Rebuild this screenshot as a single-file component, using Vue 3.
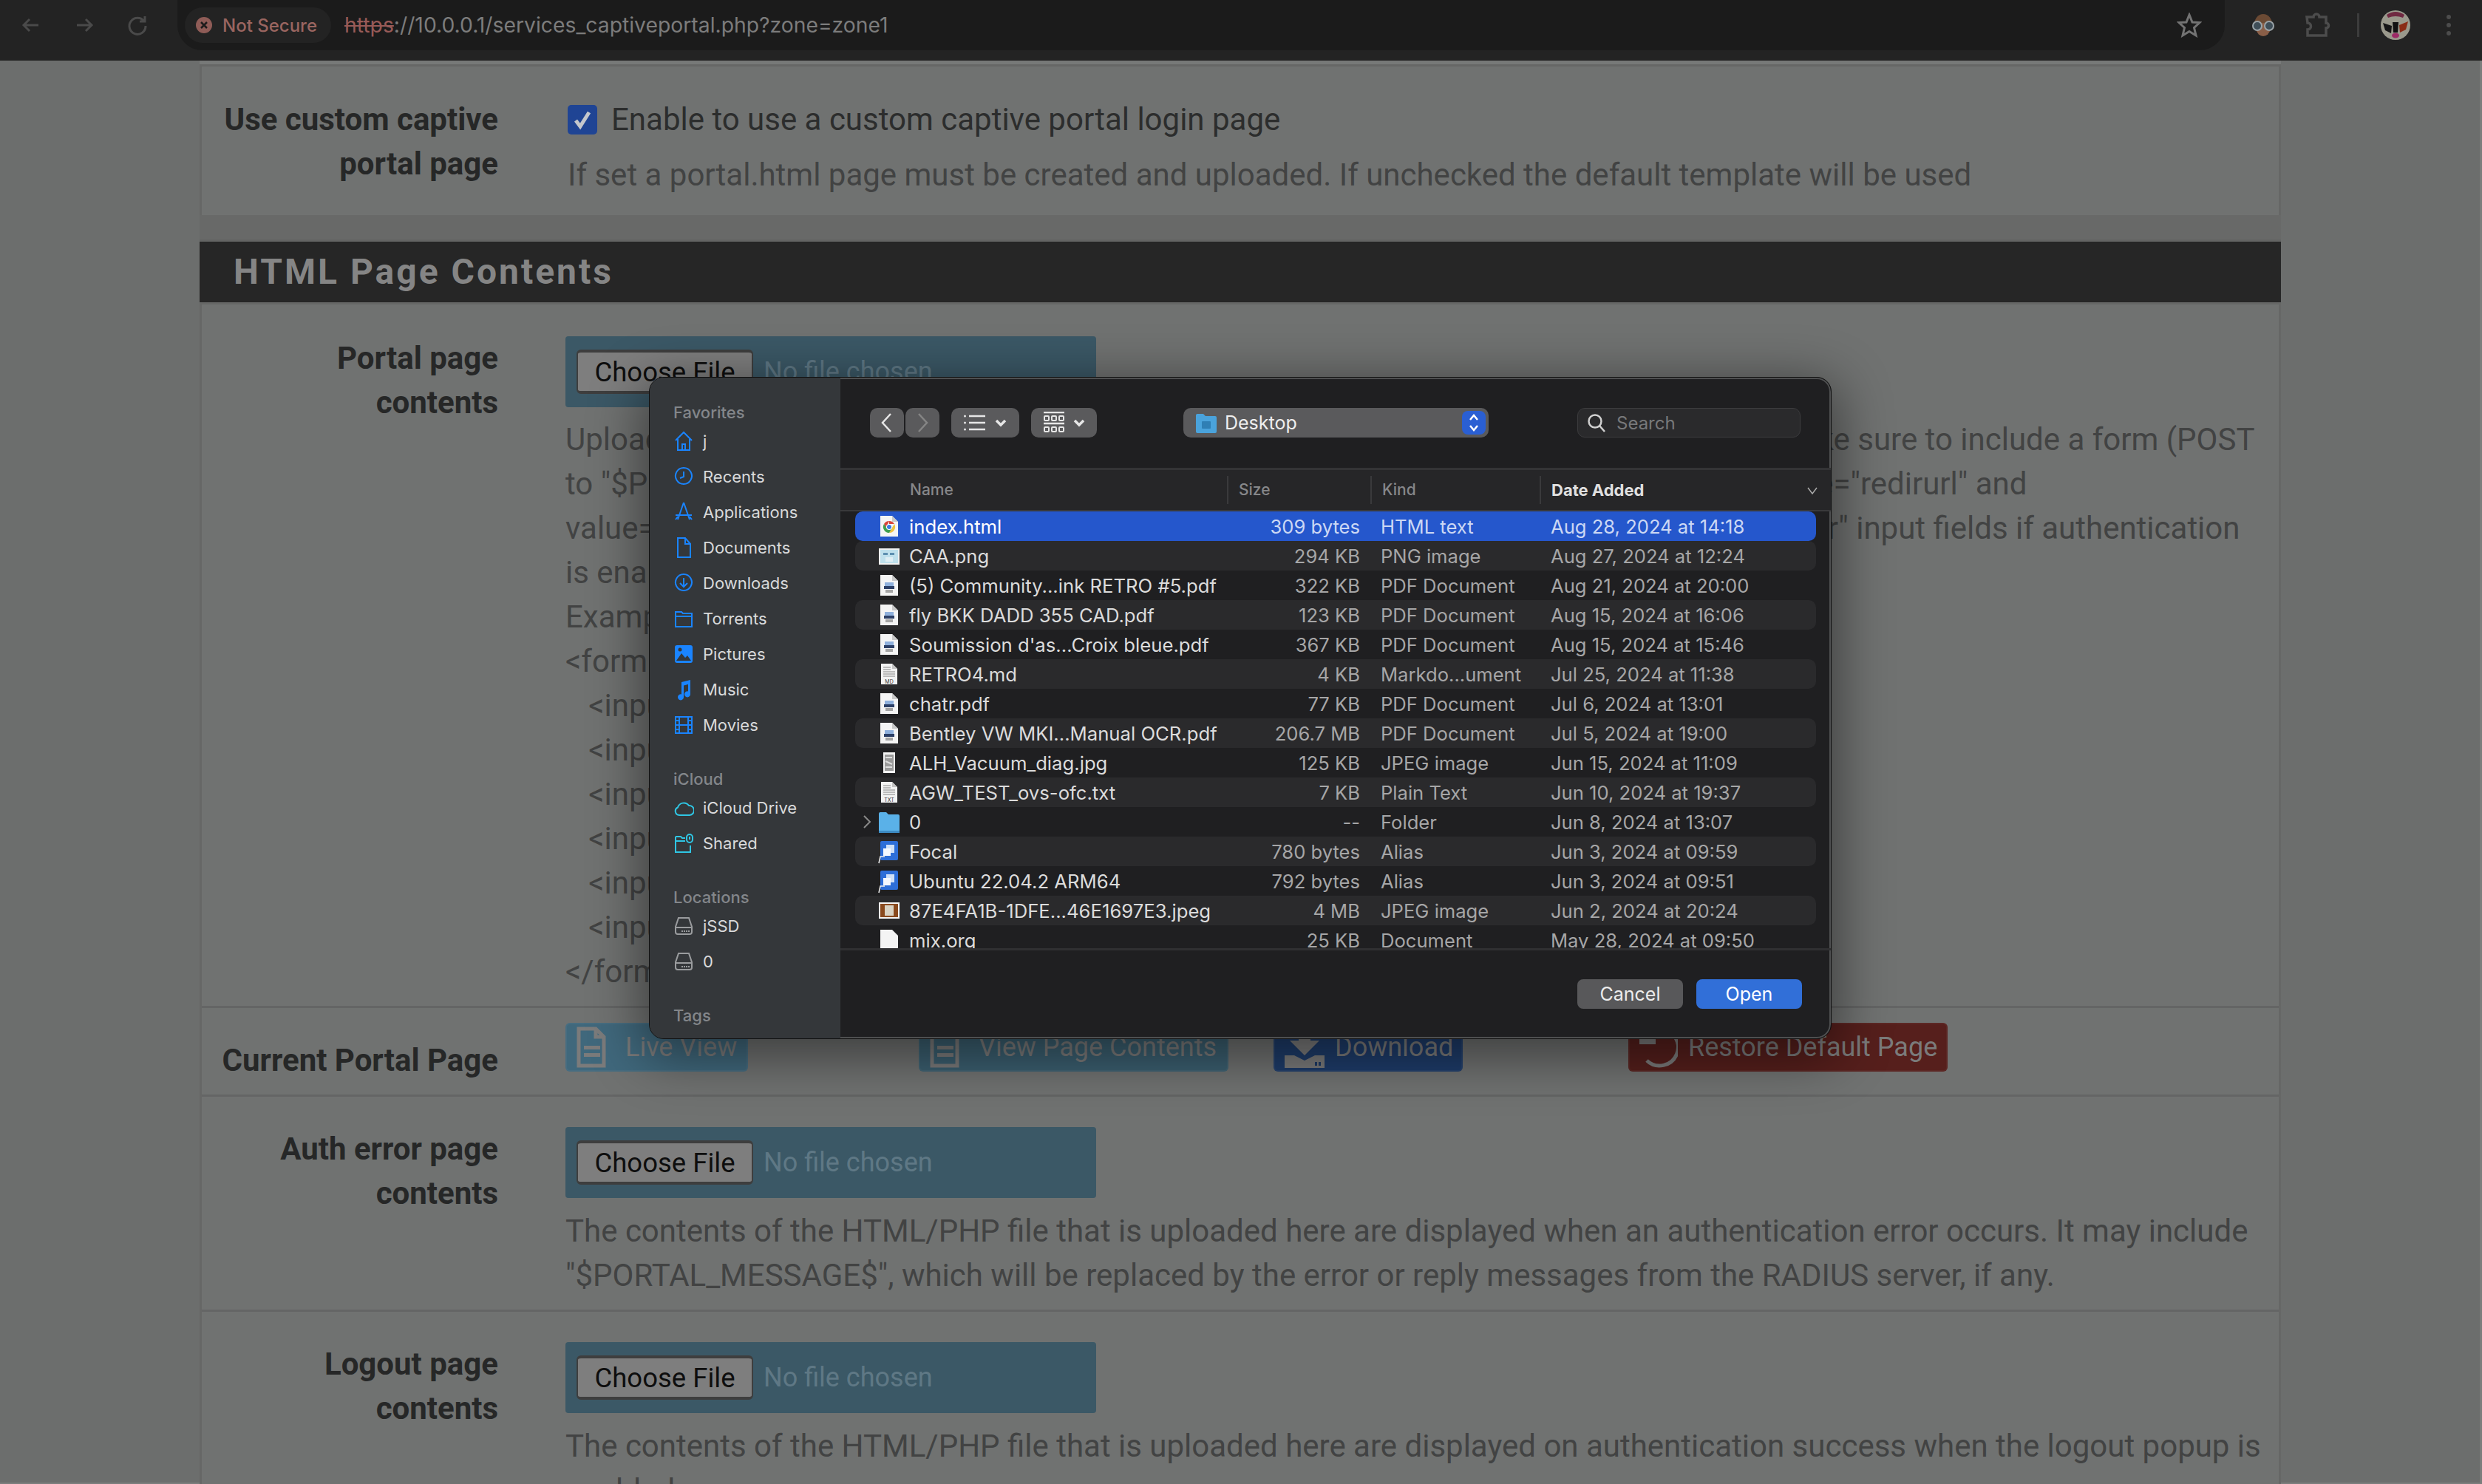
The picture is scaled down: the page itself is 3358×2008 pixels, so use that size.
<script setup>
const sidebar = [
  { title: 'Favorites', items: [
    { label: 'j', icon: 'home' },
    { label: 'Recents', icon: 'clock' },
    { label: 'Applications', icon: 'apps' },
    { label: 'Documents', icon: 'doc' },
    { label: 'Downloads', icon: 'download' },
    { label: 'Torrents', icon: 'folder' },
    { label: 'Pictures', icon: 'picture' },
    { label: 'Music', icon: 'music' },
    { label: 'Movies', icon: 'film' }
  ] },
  { title: 'iCloud', items: [
    { label: 'iCloud Drive', icon: 'cloud', tone: 'cyan' },
    { label: 'Shared', icon: 'shared', tone: 'cyan' }
  ] },
  { title: 'Locations', items: [
    { label: 'jSSD', icon: 'disk', tone: 'grey' },
    { label: '0', icon: 'disk', tone: 'grey' }
  ] },
  { title: 'Tags', items: [] }
]

const paths = {
  home: 'M2 14 L13 3 L24 14 M5 12 V27 H21 V12 M11 27 V19 H15 V27',
  clock: 'M13 3 A11 11 0 1 1 12.900 3 Z M13 8 V15 L8 17',
  apps: 'M13 2 L21 25 M13 2 L5 25 M2 19 H24 M2 25 L5 21 M24 25 L21 21',
  doc: 'M5 2 H15 L22 10 V28 H5 Z M15 2 V10 H22',
  download: 'M13 3 A11 11 0 1 1 12.900 3 Z M13 8 V20 M8 15 L13 20 L18 15',
  folder: 'M2 6 H10 L12 8 H24 V26 H2 Z M2 12 H24',
  film: 'M2 4 H24 V26 H2 Z M7 4 V26 M19 4 V26 M7 15 H19 M2 9 H7 M2 15 H7 M2 21 H7 M19 9 H24 M19 15 H24 M19 21 H24',
  cloud: 'M7 25 A5.500 5.500 0 0 1 5 14.500 A8.500 8.500 0 0 1 20 12 A6.500 6.500 0 0 1 21 25 Z',
  shared: 'M2 6 H9 L11 8 H15 M2 6 V27 H22 V18 M2 12 H15 M21 3 A4 4 0 0 1 25 7 V10 A4 4 0 0 1 17 10 V7 A4 4 0 0 1 21 3 Z M21 6 V10',
  disk: 'M6 4 H20 L24 16 V23 A3 3 0 0 1 21 26 H5 A3 3 0 0 1 2 23 V16 Z M2 17 H24 M11 21 V23 M14 21 V23 M17 21 V23 M20 21 V23'
}

const files = [
  { name: 'index.html', size: '309 bytes', kind: 'HTML text', date: 'Aug 28, 2024 at 14:18', icon: 'chrome', selected: true },
  { name: 'CAA.png', size: '294 KB', kind: 'PNG image', date: 'Aug 27, 2024 at 12:24', icon: 'png' },
  { name: '(5) Community...ink RETRO #5.pdf', size: '322 KB', kind: 'PDF Document', date: 'Aug 21, 2024 at 20:00', icon: 'pdf' },
  { name: 'fly BKK DADD 355 CAD.pdf', size: '123 KB', kind: 'PDF Document', date: 'Aug 15, 2024 at 16:06', icon: 'pdf' },
  { name: "Soumission d'as...Croix bleue.pdf", size: '367 KB', kind: 'PDF Document', date: 'Aug 15, 2024 at 15:46', icon: 'pdf' },
  { name: 'RETRO4.md', size: '4 KB', kind: 'Markdo...ument', date: 'Jul 25, 2024 at 11:38', icon: 'text', tag: 'MD' },
  { name: 'chatr.pdf', size: '77 KB', kind: 'PDF Document', date: 'Jul 6, 2024 at 13:01', icon: 'pdf' },
  { name: 'Bentley VW MKI...Manual OCR.pdf', size: '206.7 MB', kind: 'PDF Document', date: 'Jul 5, 2024 at 19:00', icon: 'pdf' },
  { name: 'ALH_Vacuum_diag.jpg', size: '125 KB', kind: 'JPEG image', date: 'Jun 15, 2024 at 11:09', icon: 'scan' },
  { name: 'AGW_TEST_ovs-ofc.txt', size: '7 KB', kind: 'Plain Text', date: 'Jun 10, 2024 at 19:37', icon: 'text', tag: 'TXT' },
  { name: '0', size: '--', kind: 'Folder', date: 'Jun 8, 2024 at 13:07', icon: 'folder', expand: true },
  { name: 'Focal', size: '780 bytes', kind: 'Alias', date: 'Jun 3, 2024 at 09:59', icon: 'alias' },
  { name: 'Ubuntu 22.04.2 ARM64', size: '792 bytes', kind: 'Alias', date: 'Jun 3, 2024 at 09:51', icon: 'alias' },
  { name: '87E4FA1B-1DFE...46E1697E3.jpeg', size: '4 MB', kind: 'JPEG image', date: 'Jun 2, 2024 at 20:24', icon: 'photo' },
  { name: 'mix.org', size: '25 KB', kind: 'Document', date: 'May 28, 2024 at 09:50', icon: 'blank' }
]

const portalHelp = [
  'Upload an HTML/PHP file for the portal page here (leave blank to keep the current one). Make sure to include a form (POST',
  'to "$PORTAL_ACTION$") with a submit button (name="accept") and a hidden field with name="redirurl" and',
  'value="$PORTAL_REDIRURL$". Include the "auth_user" and "auth_pass" and/or "auth_voucher" input fields if authentication',
  'is enabled, otherwise it will always fail.',
  'Example code for the form:',
  '<form method="post" action="$PORTAL_ACTION$">',
  '   <input name="auth_user" type="text">',
  '   <input name="auth_pass" type="password">',
  '   <input name="auth_voucher" type="text">',
  '   <input name="redirurl" type="hidden" value="$PORTAL_REDIRURL$">',
  '   <input name="zone" type="hidden" value="$PORTAL_ZONE$">',
  '   <input name="accept" type="submit" value="Continue">',
  '</form>'
]
</script>

<template>
  <div class="screen">
    <header class="chrome">
      <svg class="nav-icon" width="32" height="32" viewBox="0 0 32 32"><path d="M26 16 H7 M14 8 L6 16 L14 24" /></svg>
      <svg class="nav-icon fwd" width="32" height="32" viewBox="0 0 32 32"><path d="M6 16 H25 M18 8 L26 16 L18 24" /></svg>
      <svg class="nav-icon reload" width="32" height="32" viewBox="0 0 32 32"><path d="M25 11 A11 11 0 1 0 27 17 M26 4 V11 H19" /></svg>
      <div class="omnibox">
        <div class="chip">
          <svg width="24" height="24" viewBox="0 0 24 24"><circle cx="12" cy="12" r="11" fill="#8f5c57" /><path d="M8 8 L16 16 M16 8 L8 16" stroke="#1b1b1b" stroke-width="2.500" /></svg>
          <span>Not Secure</span>
        </div>
        <div class="url"><s>https</s>://10.0.0.1/services_captiveportal.php?zone=zone1</div>
        <svg class="star" width="34" height="34" viewBox="0 0 34 34"><path d="M17 3 L21 13 L31 13.500 L23.500 20.500 L26 31 L17 25.500 L8 31 L10.500 20.500 L3 13.500 L13 13 Z" /></svg>
      </div>
      <div class="ext-tray">
        <svg width="30" height="30" viewBox="0 0 30 30">
          <ellipse cx="15" cy="14" rx="12" ry="14" fill="#6b4a34" />
          <ellipse cx="15" cy="21" rx="9" ry="9" fill="#8a5f48" />
          <circle cx="7" cy="16" r="6" fill="#3f4e58" stroke="#9aa3a8" stroke-width="2" />
          <circle cx="23" cy="16" r="6" fill="#3f4e58" stroke="#9aa3a8" stroke-width="2" />
        </svg>
        <svg class="puzzle" width="36" height="36" viewBox="0 0 36 36"><path d="M4 7 H13 A4 4 0 0 1 21 7 H30 V15 A3.500 3.500 0 0 1 30 22 V32 H5 V24 A4.500 4.500 0 0 0 5 15 Z" /></svg>
        <span class="tray-sep"></span>
        <svg width="40" height="42" viewBox="0 0 40 42">
          <ellipse cx="20" cy="21" rx="20" ry="20" fill="#9a998c" />
          <path d="M8 7 Q20 -1 32 7 L30 11 Q20 7 10 11 Z" fill="#702a42" />
          <path d="M3 18 L15 22 L14 32 L6 28 Z" fill="#161616" />
          <path d="M37 16 L25 21 L26 31 L34 27 Z" fill="#8a2c16" />
          <path d="M16 17 L24 17 L23 31 L17 31 Z" fill="#111" />
          <ellipse cx="20" cy="35" rx="5" ry="3.500" fill="#9c2a66" />
        </svg>
        <div class="dots"><i></i><i></i><i></i></div>
      </div>
    </header>

    <main class="page">
      <div class="top-strip"></div>
      <section class="panel">
        <div class="row first">
          <div class="label">Use custom captive<br />portal page</div>
          <div>
            <div class="check-line">
              <span class="checkbox"><svg width="40" height="40" viewBox="0 0 40 40"><path d="M11 21 L17 29 L29 10" /></svg></span>
              Enable to use a custom captive portal login page
            </div>
            <p class="help check-help">If set a portal.html page must be created and uploaded. If unchecked the default template will be used</p>
          </div>
        </div>
      </section>
      <div class="panel-gap"></div>
      <h2 class="panel-title">HTML Page Contents</h2>
      <section class="panel">
        <div class="row portal">
          <div class="label">Portal page<br />contents</div>
          <div>
            <div class="file-box"><button class="file-btn">Choose File</button><span>No file chosen</span></div>
            <p class="help"><span v-for="line in portalHelp" :key="line" class="help-line">{{ line }}</span></p>
          </div>
        </div>
        <div class="row actions-row">
          <div class="label">Current Portal Page</div>
          <div class="actions">
            <a class="act live">
              <svg width="40" height="56" viewBox="0 0 40 56"><path d="M3 3 H26 L37 14 V53 H3 Z M26 3 V14 H37" /><path class="solid" d="M10 26 H32 V31 H10 Z M10 36 H32 V41 H10 Z" /></svg>
              Live View
            </a>
            <a class="act pagec">
              <svg width="40" height="56" viewBox="0 0 40 56"><path d="M3 3 H26 L37 14 V53 H3 Z M26 3 V14 H37" /><path class="solid" d="M10 26 H32 V31 H10 Z M10 36 H32 V41 H10 Z" /></svg>
              View Page Contents
            </a>
            <a class="act down">
              <svg width="54" height="58" viewBox="0 0 54 58">
                <path class="solid" d="M19 2 H35 V20 H47 L27 40 L7 20 H19 Z M0 40 H13 L27 47 L41 40 H54 V57 H0 Z" />
                <path class="tray-dots" d="M41 49 H44 V54 H41 Z M46 49 H49 V54 H46 Z" />
              </svg>
              Download
            </a>
            <a class="act restore">
              <svg width="52" height="58" viewBox="0 0 52 58">
                <path d="M27 4 A25 25 0 1 1 10 47" />
                <path class="solid" d="M0 10 H7 V18 H22 V25 H0 Z" />
              </svg>
              Restore Default Page
            </a>
          </div>
        </div>
        <div class="row">
          <div class="label">Auth error page<br />contents</div>
          <div>
            <div class="file-box"><button class="file-btn">Choose File</button><span>No file chosen</span></div>
            <p class="help">
              <span class="help-line">The contents of the HTML/PHP file that is uploaded here are displayed when an authentication error occurs. It may include</span>
              <span class="help-line">"$PORTAL_MESSAGE$", which will be replaced by the error or reply messages from the RADIUS server, if any.</span>
            </p>
          </div>
        </div>
        <div class="row">
          <div class="label">Logout page<br />contents</div>
          <div>
            <div class="file-box"><button class="file-btn">Choose File</button><span>No file chosen</span></div>
            <p class="help">
              <span class="help-line">The contents of the HTML/PHP file that is uploaded here are displayed on authentication success when the logout popup is</span>
              <span class="help-line">enabled.</span>
            </p>
          </div>
        </div>
      </section>
    </main>

    <!-- macOS open panel, floating over the page -->
    <div class="dialog">
      <aside class="side">
        <div v-for="group in sidebar" :key="group.title" class="side-group">
          <div class="side-head">{{ group.title }}</div>
          <div v-for="item in group.items" :key="item.label" class="side-item" :class="item.tone">
            <svg class="side-icon" width="28" height="30" viewBox="0 0 26 30">
              <path v-if="paths[item.icon]" :d="paths[item.icon]" />
              <template v-else-if="item.icon === 'picture'">
                <rect x="1" y="3" width="24" height="24" rx="3" class="blue-fill" />
                <path d="M3 24 L10 14 L15 20 L18 17 L23 24 Z" class="dark-fill" />
                <circle cx="8" cy="9" r="2.500" class="dark-fill" />
              </template>
              <path v-else-if="item.icon === 'music'" class="blue-fill" d="M10 5 L22 2 V21 A4 4 0 1 1 19 17.500 V8 L13 9.500 V25 A4 4 0 1 1 10 21.500 Z" />
            </svg>
            <span>{{ item.label }}</span>
          </div>
        </div>
      </aside>

      <div class="browser">
        <div class="dlg-toolbar">
          <div class="tool nav-btn">
            <svg width="20" height="30" viewBox="0 0 20 30"><path d="M15 3 L4 15 L15 27" /></svg>
          </div>
          <div class="tool nav-btn off">
            <svg width="20" height="30" viewBox="0 0 20 30"><path d="M5 3 L16 15 L5 27" /></svg>
          </div>
          <div class="tool view-btn">
            <svg width="30" height="24" viewBox="0 0 30 24">
              <path d="M7 3 H29 M7 12 H29 M7 21 H29" />
              <circle cx="1.500" cy="3" r="1.500" class="white-fill" />
              <circle cx="1.500" cy="12" r="1.500" class="white-fill" />
              <circle cx="1.500" cy="21" r="1.500" class="white-fill" />
            </svg>
            <svg class="chev" width="16" height="12" viewBox="0 0 16 12"><path d="M2 3 L8 9 L14 3" /></svg>
          </div>
          <div class="tool grid-btn">
            <svg width="28" height="30" viewBox="0 0 28 30">
              <path d="M0 1 H28 M0 16 H28" />
              <rect x="1" y="6" width="6" height="6" rx="1" />
              <rect x="11" y="6" width="6" height="6" rx="1" />
              <rect x="21" y="6" width="6" height="6" rx="1" />
              <rect x="1" y="21" width="6" height="6" rx="1" />
              <rect x="11" y="21" width="6" height="6" rx="1" />
              <rect x="21" y="21" width="6" height="6" rx="1" />
            </svg>
            <svg class="chev" width="16" height="12" viewBox="0 0 16 12"><path d="M2 3 L8 9 L14 3" /></svg>
          </div>
          <div class="tool place">
            <svg width="30" height="28" viewBox="0 0 30 28">
              <path d="M1 4 A2 2 0 0 1 3 2 H11 L14 5 H27 A2 2 0 0 1 29 7 V26 A2 2 0 0 1 27 28 H3 A2 2 0 0 1 1 26 Z" fill="#4aa3dc" />
              <rect x="9" y="12" width="12" height="10" rx="1" fill="#2f7fb5" />
            </svg>
            <span>Desktop</span>
            <div class="stepper">
              <svg width="16" height="32" viewBox="0 0 16 32"><path d="M3 12 L8 6 L13 12 M3 20 L8 26 L13 20" /></svg>
            </div>
          </div>
          <div class="search">
            <svg width="26" height="26" viewBox="0 0 26 26"><circle cx="11" cy="11" r="8.500" /><path d="M17 17 L24 25" /></svg>
            <span>Search</span>
          </div>
        </div>

        <div class="cols">
          <span class="col-name">Name</span>
          <span class="col-size">Size</span>
          <span class="col-kind">Kind</span>
          <span class="col-date">Date Added</span>
          <svg class="sort" width="16" height="12" viewBox="0 0 16 12"><path d="M2 2 L8 10 L14 2" /></svg>
        </div>

        <div class="list">
          <div v-for="(f, i) in files" :key="f.name" class="file" :class="{ selected: f.selected, stripe: i % 2 === 1 }">
            <div class="file-icon">
              <svg v-if="f.expand" class="disclosure" width="14" height="22" viewBox="0 0 14 22"><path d="M3 3 L11 11 L3 19" /></svg>
              <svg width="32" height="36" viewBox="0 0 32 36">
                <template v-if="f.icon === 'chrome'">
                  <path d="M4 4 H20 L28 12 V32 H4 Z" fill="#f4f4f4" />
                  <path d="M20 4 V12 H28 Z" fill="#c9c9c9" />
                  <path d="M16 11 A8 8 0 0 1 23 15 H16 Z M16 11 A8 8 0 0 0 9 15 L12 20 Z" fill="#d8453a" />
                  <path d="M23 15 A8 8 0 0 1 16 27 L20 20 Z" fill="#eec33f" />
                  <path d="M9 15 A8 8 0 0 0 16 27 L20 20 L12 20 Z" fill="#3f9e4f" />
                  <circle cx="16" cy="19" r="4" fill="#fff" />
                  <circle cx="16" cy="19" r="3" fill="#3c7be0" />
                </template>
                <template v-else-if="f.icon === 'png'">
                  <rect x="2" y="8" width="28" height="22" fill="#f2f2f2" />
                  <rect x="4" y="10" width="24" height="18" fill="#bfe0ec" />
                  <rect x="8" y="14" width="6" height="3" fill="#5d8fb0" />
                  <rect x="17" y="14" width="6" height="3" fill="#5d8fb0" />
                  <rect x="11" y="20" width="10" height="6" fill="#dfeef4" />
                </template>
                <template v-else-if="f.icon === 'pdf'">
                  <path d="M4 4 H20 L28 12 V32 H4 Z" fill="#f4f4f4" />
                  <path d="M20 4 V12 H28 Z" fill="#c9c9c9" />
                  <rect x="10" y="14" width="12" height="5" fill="#8fb0dc" />
                  <rect x="9" y="19" width="14" height="4" fill="#2c3f66" />
                  <rect x="11" y="24" width="10" height="4" fill="#a5a5a5" />
                </template>
                <template v-else-if="f.icon === 'text'">
                  <path d="M5 4 H20 L27 11 V32 H5 Z" fill="#f2f2f2" />
                  <path d="M20 4 V11 H27 Z" fill="#c4c4c4" />
                  <path d="M8 9 H18 M8 12 H18 M8 15 H24 M8 18 H24 M8 21 H24" stroke="#aaa" stroke-width="1.500" />
                  <text x="16" y="30.500" class="tag">{{ f.tag }}</text>
                </template>
                <template v-else-if="f.icon === 'scan'">
                  <rect x="8" y="4" width="16" height="28" fill="#f4f4f4" />
                  <rect x="10" y="7" width="12" height="22" fill="#9a9a9a" />
                  <path d="M11 11 H20 M11 16 L20 20 M11 24 H20" stroke="#ddd" stroke-width="2" />
                </template>
                <template v-else-if="f.icon === 'folder'">
                  <path d="M2 7 A2 2 0 0 1 4 5 H12 L15 8 H28 A2 2 0 0 1 30 10 V31 A2 2 0 0 1 28 33 H4 A2 2 0 0 1 2 31 Z" fill="#5ab1e8" />
                  <rect x="2" y="30" width="28" height="3" fill="#3d8cc4" />
                </template>
                <template v-else-if="f.icon === 'alias'">
                  <rect x="4" y="4" width="24" height="26" rx="2" fill="#2d6ed8" />
                  <rect x="12" y="9" width="11" height="11" fill="#cfe0f7" />
                  <rect x="8" y="14" width="10" height="10" fill="#f4f8ff" />
                  <path d="M2 34 L4 25 L10 25" fill="none" stroke="#eee" stroke-width="1.500" />
                </template>
                <template v-else-if="f.icon === 'photo'">
                  <rect x="2" y="7" width="28" height="22" fill="#f6f6f6" />
                  <rect x="4" y="9" width="24" height="18" fill="#8a4a1e" />
                  <rect x="10" y="11" width="12" height="14" fill="#d9d3c4" />
                </template>
                <path v-else d="M4 4 H20 L28 12 V32 H4 Z" fill="#f4f4f4" />
              </svg>
            </div>
            <span class="f-name">{{ f.name }}</span>
            <span class="f-size">{{ f.size }}</span>
            <span class="f-kind">{{ f.kind }}</span>
            <span class="f-date">{{ f.date }}</span>
          </div>
        </div>

        <div class="dlg-footer">
          <button class="dlg-btn">Cancel</button>
          <button class="dlg-btn primary">Open</button>
        </div>
      </div>
    </div>
  </div>
</template>

<style>
html, body {
  margin: 0;
  background: #6c6e6d;
  overflow: hidden;
}
</style>

<style scoped>
.screen {
  position: relative;
  width: 3358px;
  height: 2008px;
  overflow: hidden;
  background: #6c6e6d;
  box-shadow: inset -3px -2px 0 #7b7d7c;
  font-family: Roboto, "Liberation Sans", sans-serif;
}

/* browser toolbar */
.chrome {
  height: 82px;
  background: #232323;
  display: flex;
  align-items: flex-start;
  padding-left: 26px;
  box-sizing: border-box;
}
.nav-icon {
  margin-top: 18px;
  margin-right: 40px;
  fill: none;
  stroke: #4a4a4a;
  stroke-width: 3;
}
.nav-icon.reload {
  margin-right: 0;
}
.omnibox {
  margin-left: 38px;
  width: 2770px;
  height: 68px;
  background: #1b1b1b;
  border-radius: 0 0 34px 34px;
  display: flex;
  align-items: center;
  padding-left: 10px;
  box-sizing: border-box;
  font-family: Inter, Roboto, sans-serif;
}
.chip {
  width: 198px;
  height: 48px;
  background: #232323;
  border-radius: 24px;
  display: flex;
  align-items: center;
  gap: 13px;
  padding-left: 14px;
  box-sizing: border-box;
  color: #9a6560;
  font-size: 24px;
  font-weight: 500;
  white-space: nowrap;
}
.url {
  margin-left: 18px;
  font-size: 28.300px;
  color: #7c7c7c;
  flex: 1;
}
.url s {
  color: #985a57;
}
.star {
  margin-right: 31px;
  fill: none;
  stroke: #737373;
  stroke-width: 3;
}
.ext-tray {
  display: flex;
  align-items: center;
  height: 68px;
  margin-left: 37px;
}
.puzzle {
  margin-left: 40px;
  fill: none;
  stroke: #4c4c4c;
  stroke-width: 3.500;
}
.tray-sep {
  width: 3px;
  height: 32px;
  margin: 0 29px 0 36px;
  background: #3c3c3c;
}
.dots {
  margin-left: 49px;
  display: flex;
  flex-direction: column;
  gap: 5px;
}
.dots i {
  width: 6px;
  height: 6px;
  border-radius: 50%;
  background: #4c4c4c;
}

/* page */
.page {
  width: 2816px;
  margin-left: 270px;
  font-size: 42px;
  line-height: 60px;
}
.top-strip {
  height: 5px;
  background: #777978;
  border-bottom: 3px solid #666766;
}
.panel {
  background: #707271;
  border-left: 3px solid #666766;
  border-right: 3px solid #666766;
}
.row {
  display: grid;
  grid-template-columns: 401px 1fr;
  column-gap: 91px;
  padding: 41px 30px 16px 0;
  border-bottom: 3px solid #646565;
}
.row.first {
  padding: 42px 30px 24px 0;
  border-bottom: 0;
}
.row.portal {
  padding-top: 43px;
}
.row:last-child {
  border-bottom: 0;
}
.label {
  text-align: right;
  font-weight: 700;
  color: #262727;
}
.check-line {
  display: flex;
  align-items: center;
  gap: 19px;
  color: #2c2d2d;
}
.checkbox {
  width: 40px;
  height: 40px;
  margin-left: 3px;
  border-radius: 5px;
  background: #1f4494;
}
.checkbox svg {
  display: block;
  fill: none;
  stroke: #c4c7cc;
  stroke-width: 5;
}
.help {
  margin: 15px 0 0;
  color: #424343;
}
.portal .help {
  margin-top: 14px;
}
.check-help {
  padding-left: 3px;
}
.help-line {
  display: block;
  white-space: pre;
}
.panel-gap {
  height: 33px;
  background: #686968;
  border-bottom: 3px solid #636463;
}
.panel-title {
  margin: 0;
  height: 82px;
  padding-left: 46px;
  background: #262626;
  color: #858585;
  font-size: 48px;
  line-height: 82px;
  font-weight: 700;
  letter-spacing: 3px;
  border-bottom: 3px solid #666766;
}
.file-box {
  width: 718px;
  height: 96px;
  background: #3b5866;
  border-radius: 4px;
  display: flex;
  align-items: center;
  gap: 14px;
  padding-left: 15px;
  box-sizing: border-box;
  color: #5f7885;
  font-size: 36px;
}
.file-btn {
  width: 239px;
  height: 60px;
  padding: 0;
  background: #7e7e7e;
  border: 2px solid #3e3e3e;
  border-top-width: 4px;
  border-bottom-width: 4px;
  border-radius: 6px;
  color: #0e0e0e;
  font-family: inherit;
  font-size: 36.500px;
}
.actions-row {
  padding: 20px 30px 16px 0;
}
.actions-row .label {
  padding-top: 21px;
}
.actions {
  display: flex;
  height: 66px;
}
.act {
  display: flex;
  align-items: center;
  gap: 14px;
  height: 66px;
  padding-left: 13px;
  box-sizing: border-box;
  border: 2px solid rgba(255, 255, 255, 0.04);
  border-radius: 6px;
  font-size: 36px;
  white-space: nowrap;
  color: #7b7b7b;
}
.act svg {
  flex: none;
  fill: none;
  stroke: currentColor;
  stroke-width: 5;
}
.act .solid {
  fill: currentColor;
  stroke: none;
}
.act .tray-dots {
  fill: #1d3a66;
  stroke: none;
}
.act.live {
  width: 247px;
  gap: 26px;
  background: #40687c;
}
.act.pagec {
  width: 419px;
  gap: 26px;
  margin-left: 231px;
  background: #3b5f70;
}
.act.down {
  width: 256px;
  margin-left: 61px;
  background: #1e3c6a;
}
.act.restore {
  width: 432px;
  margin-left: 224px;
  background: #561f1c;
}

/* open panel */
.dialog {
  position: absolute;
  left: 878px;
  top: 510px;
  width: 1600px;
  height: 896px;
  box-sizing: border-box;
  display: flex;
  background: #1f1f21;
  border: 1px solid #111;
  border-radius: 20px;
  overflow: hidden;
  font-family: Inter, Roboto, sans-serif;
  box-shadow: inset 0 0 0 2px #4e4f50, 0 16px 70px 10px rgba(0, 0, 0, 0.45);
}
.side {
  width: 258px;
  flex: none;
  padding: 32px 0 0 32px;
  box-sizing: border-box;
  background: #34373a;
  font-size: 22px;
}
.side-group + .side-group {
  margin-top: 34px;
}
.side-head {
  height: 30px;
  line-height: 30px;
  font-size: 22px;
  font-weight: 500;
  color: #83868a;
}
.side-item {
  height: 48px;
  display: flex;
  align-items: center;
  gap: 12px;
  color: #d9dadb;
}
.side-icon {
  flex: none;
  fill: none;
  stroke: #1a84ff;
  stroke-width: 2;
}
.side-item.cyan .side-icon {
  stroke: #2fc6e4;
}
.side-item.grey .side-icon {
  stroke: #9a9c9e;
}
.blue-fill {
  fill: #1a84ff;
  stroke: none;
}
.dark-fill {
  fill: #34373a;
  stroke: none;
}
.browser {
  flex: 1;
  min-width: 0;
  display: flex;
  flex-direction: column;
}
.dlg-toolbar {
  height: 125px;
  flex: none;
  box-sizing: border-box;
  padding: 41px 0 0 40px;
  display: flex;
  align-items: flex-start;
  color: #eee;
  border-bottom: 3px solid #343436;
}
.tool {
  height: 40px;
  border-radius: 10px;
  background: #5a5a5c;
  display: flex;
  align-items: center;
  justify-content: center;
}
.tool svg {
  fill: none;
  stroke: #e6e6e6;
  stroke-width: 2.500;
}
.white-fill {
  fill: #e6e6e6;
  stroke: none;
}
.nav-btn {
  width: 46px;
  margin-right: 2px;
}
.nav-btn.off svg {
  stroke: #858585;
}
.view-btn {
  width: 92px;
  margin-left: 14px;
  gap: 12px;
}
.grid-btn {
  width: 89px;
  margin-left: 16px;
  gap: 12px;
}
.grid-btn rect {
  stroke-width: 2;
}
.tool .chev {
  stroke-width: 3.500;
}
.place {
  width: 413px;
  margin-left: 117px;
  justify-content: flex-start;
  padding-left: 16px;
  box-sizing: border-box;
  gap: 10px;
  font-size: 25px;
  position: relative;
}
.place > svg {
  stroke: none;
}
.stepper {
  position: absolute;
  right: 4px;
  top: 4px;
  width: 32px;
  height: 32px;
  border-radius: 8px;
  background: #2a5fd3;
  display: flex;
  align-items: center;
  justify-content: center;
}
.stepper svg {
  stroke: #fff;
}
.search {
  width: 302px;
  height: 40px;
  margin-left: 120px;
  box-sizing: border-box;
  border: 1px solid #3c3c3e;
  border-radius: 10px;
  background: #2a2a2c;
  display: flex;
  align-items: center;
  gap: 14px;
  padding-left: 12px;
  color: #77787a;
  font-size: 24px;
}
.search svg {
  fill: none;
  stroke: #d0d0d0;
  stroke-width: 2.500;
}
.cols {
  height: 56px;
  flex: none;
  box-sizing: border-box;
  background: #262628;
  border-bottom: 2px solid #39393b;
  display: grid;
  grid-template-columns: 523px 194px 229px 1fr;
  align-items: center;
  font-size: 21px;
  font-weight: 500;
  color: #86878a;
  position: relative;
}
.cols span {
  height: 38px;
  line-height: 38px;
  box-sizing: border-box;
}
.col-name {
  padding-left: 94px;
}
.col-size, .col-kind, .col-date {
  border-left: 2px solid #3a3a3c;
  padding-left: 14px;
}
.col-date {
  color: #e0e0e0;
  font-weight: 700;
  font-size: 22px;
}
.sort {
  position: absolute;
  right: 17px;
  top: 22px;
  fill: none;
  stroke: #aaa;
  stroke-width: 1.500;
}
.list {
  flex: 1;
  min-height: 0;
  overflow: hidden;
  padding: 0 20px;
  font-size: 25.600px;
}
.file {
  height: 40px;
  display: grid;
  grid-template-columns: 73px 428px 182px 258px 1fr;
  align-items: center;
  border-radius: 10px;
  white-space: nowrap;
  color: #a6a6a7;
}
.file.stripe {
  background: #2a2a2c;
}
.file.selected {
  background: #2557cc;
  color: #ccd8f4;
}
.file-icon {
  position: relative;
  display: flex;
  justify-content: flex-end;
  padding-right: 11px;
  height: 36px;
}
.disclosure {
  position: absolute;
  left: 9px;
  top: 7px;
  fill: none;
  stroke: #8a8a8a;
  stroke-width: 2;
}
.tag {
  fill: #333;
  font-size: 7px;
  text-anchor: middle;
}
.f-name {
  color: #dcdcdc;
  font-size: 25.700px;
}
.selected .f-name {
  color: #fff;
}
.f-size {
  text-align: right;
}
.f-kind {
  padding-left: 28px;
}
.dlg-footer {
  height: 122px;
  flex: none;
  box-sizing: border-box;
  border-top: 3px solid #303032;
  padding: 39px 39px 0 0;
  display: flex;
  justify-content: flex-end;
  gap: 18px;
}
.dlg-btn {
  width: 143px;
  height: 40px;
  padding: 0;
  border: 0;
  border-radius: 8px;
  background: #58585a;
  color: #ececec;
  font-family: inherit;
  font-size: 25px;
}
.dlg-btn.primary {
  background: #316fd8;
  color: #fff;
}
</style>
